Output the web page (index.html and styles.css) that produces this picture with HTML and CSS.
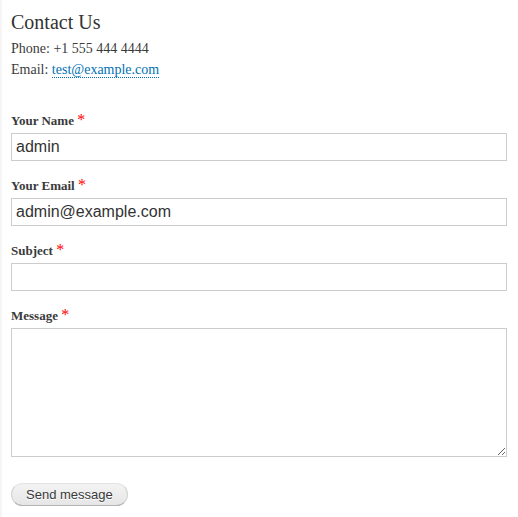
FILE: index.html
```html
<!DOCTYPE html>
<html lang="en">
<head>
    <meta charset="UTF-8">
    <meta name="viewport" content="width=device-width, initial-scale=1.0">
    <title>Contact Us</title>
    <link rel="stylesheet" href="styles.css">
</head>
<body>

    <div class="contacto">
        <h1>Contact Us</h1>
        <p class="datos">
            Phone: +1 555 444 4444<br>
            Email: <a href="#">test@example.com</a>
        </p>
    </div>

    <form id="formulario" class="formulario">
        <div class="form-item">
            <label for="nombre">Your Name <span class="requerido">*</span></label>
            <input type="text" id="nombre" value="admin">
        </div>
        <div class="form-item">
            <label for="correo">Your Email <span class="requerido">*</span></label>
            <input type="text" id="correo" value="admin@example.com">
        </div>
        <div class="form-item">
            <label for="asunto">Subject <span class="requerido">*</span></label>
            <input type="text" id="asunto">
        </div>
        <div class="form-item">
            <label for="mensaje">Message <span class="requerido">*</span></label>
            <textarea id="mensaje"></textarea>
        </div>

        <div class="acciones">
            <button type="submit">Send message</button>
        </div>
    </form>

</body>
</html>
```

FILE: styles.css
```css
body {
    font-family: "Liberation Serif", "Times New Roman", serif;
    background-color: #ffffff;
    color: #3b3b3b;
    margin: 0;
    padding: 10px 11px 0 9px;
    border-left: 2px solid #f5f5f5;
    min-height: 507px;
}
h1 {
    font-size: 20px;
    font-weight: normal;
    line-height: 24px;
    color: #333;
    margin: 0 0 4px;
}
.datos {
    font-size: 14px;
    line-height: 21px;
    margin: 0;
}
.datos a {
    color: #0071b3;
    text-decoration: none;
    border-bottom: 1px dotted #0071b3;
}
.formulario {
    margin-top: 32px;
}
.form-item {
    margin-top: 16px;
}
label {
    display: block;
    font-size: 13px;
    font-weight: bold;
    line-height: 18px;
    margin-bottom: 3px;
}
.requerido {
    color: #f00;
    font-size: 16px;
    font-weight: normal;
    line-height: 1;
}
input,
textarea {
    display: block;
    box-sizing: border-box;
    width: 100%;
    margin: 0;
    border: 1px solid #ccc;
    padding: 4px;
    font-family: "Liberation Sans", Arial, sans-serif;
    font-size: 16px;
    line-height: 18px;
    color: #333;
    background-color: #fff;
    border-radius: 0;
    outline: none;
}
textarea {
    height: 129px;
}
.acciones {
    margin-top: 26px;
}
button {
    font-family: "Liberation Sans", Arial, sans-serif;
    font-size: 13px;
    line-height: 15px;
    color: #3a3a3a;
    padding: 3px 14px;
    border: 1px solid #e4e4e4;
    border-bottom-color: #b4b4b4;
    border-left-color: #d2d2d2;
    border-right-color: #d2d2d2;
    border-radius: 20px;
    background: linear-gradient(#f3f3f3, #e6e6e6);
    text-shadow: 0 1px 0 #fff;
    cursor: pointer;
}
button:hover {
    background: linear-gradient(#f6f6f6, #ebebeb);
}
```
